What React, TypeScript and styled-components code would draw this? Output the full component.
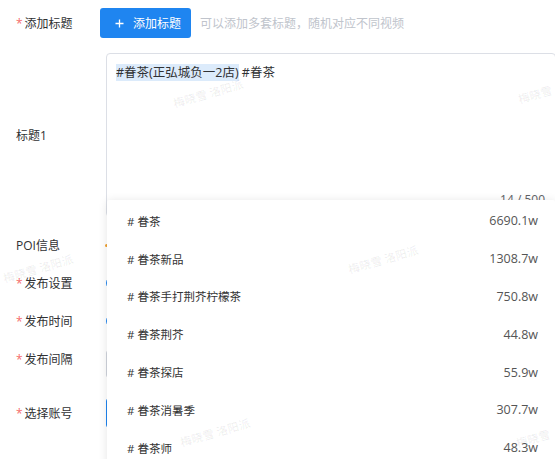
import React from "react";
import styled, { createGlobalStyle } from "styled-components";

const Global = createGlobalStyle`
  html, body { margin: 0; padding: 0; background: #fff; }
  body { font-family: "Open Sans", "Noto Sans CJK SC", sans-serif; }
`;

const Page = styled.div`
  position: relative;
  width: 555px;
  height: 459px;
  overflow: hidden;
  background: #fff;
  font-family: "Open Sans", "Noto Sans CJK SC", sans-serif;
`;

const Form = styled.div`
  display: flex;
  flex-direction: column;
  padding-top: 8px;
`;

const Row = styled.div<{ $h: number; $mt?: number }>`
  display: flex;
  align-items: center;
  height: ${(p) => p.$h}px;
  margin-top: ${(p) => p.$mt ?? 0}px;
`;

const Label = styled.div`
  width: 100px;
  flex: none;
  box-sizing: border-box;
  padding-left: 16px;
  font-size: 12px;
  color: #303133;
  white-space: nowrap;
`;

const Star = styled.span`
  color: #f56c6c;
  margin-right: 2px;
`;

const Control = styled.div<{ $indent?: number }>`
  flex: 1;
  min-width: 0;
  height: 100%;
  display: flex;
  align-items: center;
  gap: 9px;
  padding-left: ${(p) => p.$indent ?? 0}px;
`;

const PrimaryButton = styled.button`
  display: flex;
  align-items: center;
  gap: 9px;
  width: 91px;
  height: 30px;
  flex: none;
  box-sizing: border-box;
  padding: 0 0 0 15px;
  border: none;
  border-radius: 3px;
  background: #1f85f0;
  color: #fff;
  font-family: inherit;
  font-size: 12px;
`;

const Hint = styled.span`
  font-size: 12px;
  color: #c0c4cc;
  white-space: nowrap;
`;

const TextBox = styled.div`
  position: relative;
  width: 450px;
  height: 164px;
  flex: none;
  box-sizing: border-box;
  border: 1px solid #dcdfe6;
  border-radius: 4px;
  padding: 9px 9px;
  font-size: 12.5px;
  line-height: 20px;
  color: #303133;
  white-space: nowrap;
`;

const Mark = styled.span`
  background: #dcebfb;
`;

const Counter = styled.span`
  position: absolute;
  right: 10px;
  bottom: 9px;
  font-size: 12px;
  line-height: 14px;
  color: #606266;
`;

const Dot = styled.span`
  width: 3px;
  height: 3px;
  background: #f0a030;
  border-radius: 50%;
  margin-left: -1px;
`;

const Radio = styled.span`
  width: 14px;
  height: 14px;
  flex: none;
  box-sizing: border-box;
  border-radius: 50%;
  border: 1.5px solid #1f85f0;
`;

const Input = styled.span<{ $h: number; $color: string }>`
  width: 200px;
  height: ${(p) => p.$h}px;
  flex: none;
  box-sizing: border-box;
  border: 1px solid ${(p) => p.$color};
  border-radius: 3px;
`;

const BottomInput = styled(Input)`
  align-self: flex-end;
`;

const Dropdown = styled.div`
  position: absolute;
  left: 107px;
  top: 200px;
  width: 448px;
  height: 280px;
  box-sizing: border-box;
  padding-top: 2px;
  background: #fff;
  box-shadow: 0 1px 10px rgba(0, 0, 0, 0.11);
  border-radius: 2px;
`;

const Option = styled.div`
  height: 37.8px;
  display: flex;
  align-items: center;
  justify-content: space-between;
  padding: 0 17px 0 20px;
`;

const OptionName = styled.span`
  font-size: 11.5px;
  color: #333;
`;

const OptionCount = styled.span`
  font-size: 12.5px;
  color: #555;
`;

const Watermarks = styled.div`
  position: absolute;
  inset: 0;
  pointer-events: none;
`;

const Watermark = styled.span`
  position: absolute;
  font-size: 11.5px;
  font-weight: 700;
  color: rgba(0, 0, 0, 0.06);
  white-space: nowrap;
  transform: translate(-50%, -50%) rotate(-16deg);
`;

const PlusIcon = () => (
  <svg width="9" height="9" viewBox="0 0 9 9">
    <path d="M4.5 0.5v8M0.5 4.5h8" stroke="#fff" strokeWidth="1.3" />
  </svg>
);

const options: [string, string][] = [
  ["# 眷茶", "6690.1w"],
  ["# 眷茶新品", "1308.7w"],
  ["# 眷茶手打荆芥柠檬茶", "750.8w"],
  ["# 眷茶荆芥", "44.8w"],
  ["# 眷茶探店", "55.9w"],
  ["# 眷茶消暑季", "307.7w"],
  ["# 眷茶师", "48.3w"],
];

const marks: [number, number, string][] = [
  [208, 93, "梅晓雪 洛阳派"],
  [38, 268, "梅晓雪 洛阳派"],
  [383, 259, "梅晓雪 洛阳派"],
  [535, 94, "梅晓雪"],
  [215, 432, "梅晓雪 洛阳派"],
  [533, 438, "梅晓雪"],
];

export default function App() {
  return (
    <Page>
      <Global />
      <Form>
        <Row $h={30}>
          <Label>
            <Star>*</Star>添加标题
          </Label>
          <Control>
            <PrimaryButton>
              <PlusIcon />
              添加标题
            </PrimaryButton>
            <Hint>可以添加多套标题，随机对应不同视频</Hint>
          </Control>
        </Row>
        <Row $h={164} $mt={15}>
          <Label>标题1</Label>
          <Control $indent={6}>
            <TextBox>
              <Mark>#眷茶(正弘城负一2店)</Mark> #眷茶
              <Counter>14 / 500</Counter>
            </TextBox>
          </Control>
        </Row>
        <Row $h={38} $mt={9}>
          <Label>POI信息</Label>
          <Control $indent={6}>
            <Dot />
          </Control>
        </Row>
        <Row $h={38}>
          <Label>
            <Star>*</Star>发布设置
          </Label>
          <Control $indent={6}>
            <Radio />
          </Control>
        </Row>
        <Row $h={38}>
          <Label>
            <Star>*</Star>发布时间
          </Label>
          <Control $indent={6}>
            <Radio />
          </Control>
        </Row>
        <Row $h={38}>
          <Label>
            <Star>*</Star>发布间隔
          </Label>
          <Control $indent={6}>
            <BottomInput $h={28} $color="#cfd3dc" />
          </Control>
        </Row>
        <Row $h={70}>
          <Label>
            <Star>*</Star>选择账号
          </Label>
          <Control $indent={6}>
            <Input $h={30} $color="#1f85f0" />
          </Control>
        </Row>
      </Form>
      <Dropdown>
        {options.map(([name, count]) => (
          <Option key={name}>
            <OptionName>{name}</OptionName>
            <OptionCount>{count}</OptionCount>
          </Option>
        ))}
      </Dropdown>
      <Watermarks>
        {marks.map(([x, y, t], i) => (
          <Watermark key={i} style={{ left: x, top: y }}>
            {t}
          </Watermark>
        ))}
      </Watermarks>
    </Page>
  );
}
